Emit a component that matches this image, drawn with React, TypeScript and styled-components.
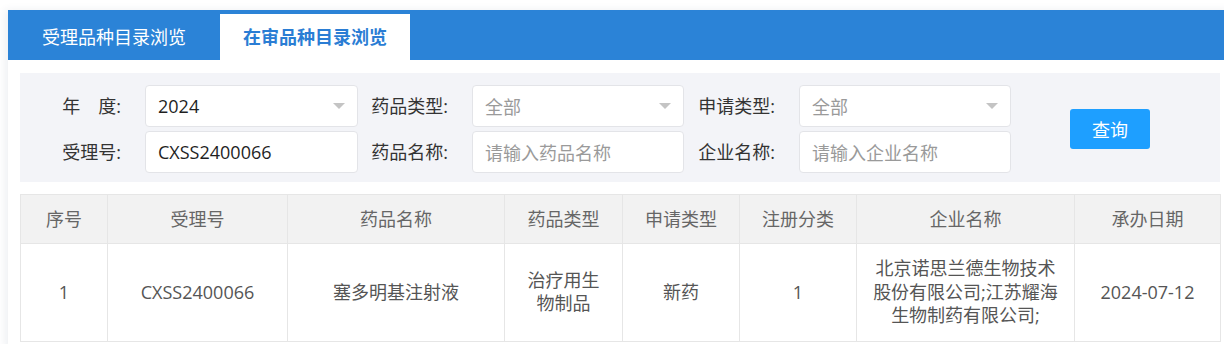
import React from "react";
import styled, { createGlobalStyle } from "styled-components";

const GlobalStyle = createGlobalStyle`
  html, body {
    margin: 0;
    padding: 0;
    background: #ffffff;
    overflow: hidden;
    font-family: "Open Sans", "Noto Sans CJK SC", sans-serif;
  }
`;

const Page = styled.div`
  padding: 10px 0 0 8px;
`;

const Panel = styled.div`
  width: 1224px;
  min-height: 340px;
  background: #ffffff;
  box-shadow: -3px 0 8px rgba(40, 60, 100, 0.08);
`;

const TabBar = styled.div`
  display: flex;
  align-items: flex-end;
  height: 50px;
  background: #2b83d7;
`;

const Tab = styled.div<{ $active?: boolean }>`
  height: 46px;
  line-height: 46px;
  padding: 0 ${(p) => (p.$active ? "23px" : "34px")};
  font-size: 18px;
  font-weight: ${(p) => (p.$active ? 700 : 400)};
  color: ${(p) => (p.$active ? "#2a7dd4" : "#ffffff")};
  background: ${(p) => (p.$active ? "#ffffff" : "transparent")};
  white-space: nowrap;
`;

const Content = styled.div`
  padding: 13px 4px 0 12px;
  width: 1200px;
`;

const Filter = styled.div`
  display: flex;
  align-items: center;
  background: #f3f4f8;
  padding: 12px 0 9px 0;
`;

const FieldGrid = styled.div`
  display: grid;
  grid-template-columns: 125px 213px 114px 212px 115px 212px;
  grid-auto-rows: 42px;
  row-gap: 4px;
`;

const Label = styled.div`
  text-align: right;
  padding-right: 24px;
  line-height: 42px;
  font-size: 18px;
  color: #333333;
  white-space: nowrap;
`;

const Field = styled.div<{ $placeholder?: boolean }>`
  display: flex;
  align-items: center;
  box-sizing: border-box;
  height: 42px;
  padding: 0 12px;
  background: #ffffff;
  border: 1px solid #e3e4e8;
  border-radius: 4px;
  font-size: 18px;
  color: ${(p) => (p.$placeholder ? "#9a9a9a" : "#1f1f1f")};
  white-space: nowrap;
`;

const Arrow = styled.span`
  margin-left: auto;
  width: 0;
  height: 0;
  border-left: 6.5px solid transparent;
  border-right: 6.5px solid transparent;
  border-top: 6px solid #c4c4c4;
`;

const QueryButton = styled.button`
  margin-left: 59px;
  width: 80px;
  height: 40px;
  border: none;
  border-radius: 3px;
  background: #1e9fff;
  color: #ffffff;
  font-family: inherit;
  font-size: 18px;
  cursor: pointer;
`;

const Table = styled.table`
  margin-top: 12px;
  width: 1200px;
  border-collapse: collapse;
  table-layout: fixed;
`;

const Th = styled.th`
  height: 48px;
  padding: 0 14px;
  background: #f2f2f2;
  border: 1px solid #e6e6e6;
  font-size: 18px;
  font-weight: 400;
  line-height: 24px;
  color: #666666;
  text-align: center;
`;

const Td = styled.td`
  padding: 13px 14px;
  border: 1px solid #e6e6e6;
  font-size: 18px;
  line-height: 23.5px;
  color: #555555;
  text-align: center;
  vertical-align: middle;
`;

const columns = [87, 180, 217, 118, 117, 117, 218, 146];
const headers = ["序号", "受理号", "药品名称", "药品类型", "申请类型", "注册分类", "企业名称", "承办日期"];
const row = [
  "1",
  "CXSS2400066",
  "塞多明基注射液",
  "治疗用生物制品",
  "新药",
  "1",
  "北京诺思兰德生物技术股份有限公司;江苏耀海生物制药有限公司;",
  "2024-07-12",
];

export default function App() {
  return (
    <>
      <GlobalStyle />
      <Page>
        <Panel>
          <TabBar>
            <Tab>受理品种目录浏览</Tab>
            <Tab $active>在审品种目录浏览</Tab>
          </TabBar>
          <Content>
            <Filter>
              <FieldGrid>
                <Label>年　度:</Label>
                <Field>
                  2024
                  <Arrow />
                </Field>
                <Label>药品类型:</Label>
                <Field $placeholder>
                  全部
                  <Arrow />
                </Field>
                <Label>申请类型:</Label>
                <Field $placeholder>
                  全部
                  <Arrow />
                </Field>
                <Label>受理号:</Label>
                <Field>CXSS2400066</Field>
                <Label>药品名称:</Label>
                <Field $placeholder>请输入药品名称</Field>
                <Label>企业名称:</Label>
                <Field $placeholder>请输入企业名称</Field>
              </FieldGrid>
              <QueryButton>查询</QueryButton>
            </Filter>
            <Table>
              <colgroup>
                {columns.map((w, i) => (
                  <col key={i} style={{ width: w }} />
                ))}
              </colgroup>
              <thead>
                <tr>
                  {headers.map((h) => (
                    <Th key={h}>{h}</Th>
                  ))}
                </tr>
              </thead>
              <tbody>
                <tr>
                  {row.map((c, i) => (
                    <Td key={i}>{c}</Td>
                  ))}
                </tr>
              </tbody>
            </Table>
          </Content>
        </Panel>
      </Page>
    </>
  );
}
